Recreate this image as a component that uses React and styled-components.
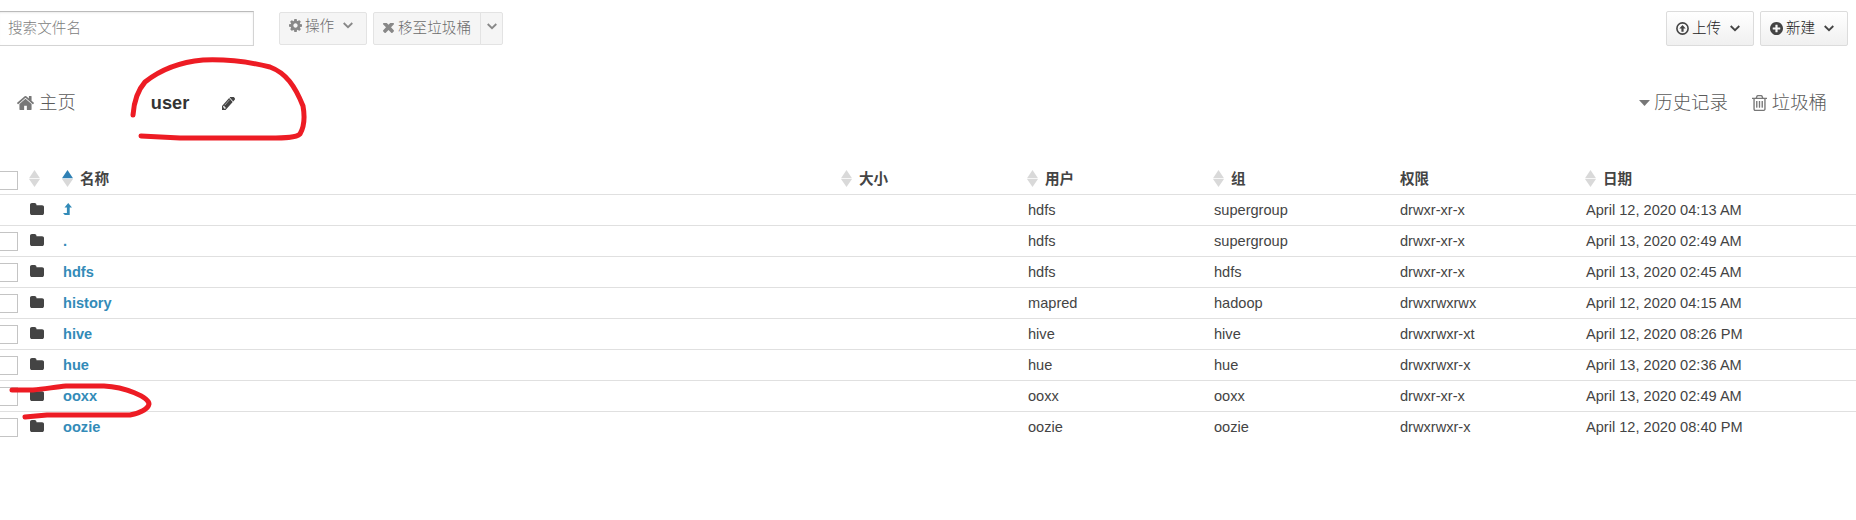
import React from "react";
import styled, { createGlobalStyle } from "styled-components";

const GlobalStyle = createGlobalStyle`
  * { box-sizing: border-box; }
  body {
    margin: 0;
    background: #fff;
    overflow: hidden;
    color: #444;
    font-family: "Liberation Sans", "Noto Sans CJK SC", sans-serif;
    font-size: 14.6px;
    line-height: 22px;
  }
`;

const Page = styled.div`
  position: relative;
  width: 1856px;
  height: 520px;
  overflow: hidden;
`;

const Toolbar = styled.header`
  display: flex;
  align-items: center;
  height: 46px;
  padding: 11px 8px 0 0;
  font-weight: 300;
`;

const SearchInput = styled.input`
  width: 256px;
  height: 35px;
  margin: 0 23px 0 -2px;
  padding: 0 9px 2px;
  border: 1px solid #d4d4d4;
  border-top-color: #bbb;
  box-shadow: inset 0 1px 2px rgba(0, 0, 0, 0.08);
  color: #555;
  font: inherit;
  outline: none;
  &::placeholder { color: #7c7c7c; opacity: 1; }
`;

const Button = styled.button`
  display: flex;
  align-items: center;
  width: ${(p) => p.$width}px;
  height: ${(p) => (p.$muted ? 33 : 35)}px;
  padding: 0 0 ${(p) => p.$lift || 1}px ${(p) => p.$pad ?? 9}px;
  margin: 0 0 0 ${(p) => p.$gap || 0}px;
  border: 1px solid ${(p) => (p.$muted ? "#e3e3e3" : "#dcdcdc")};
  border-radius: ${(p) => p.$radius || "2px"};
  background: ${(p) => (p.$muted ? "#f5f5f5" : "linear-gradient(#fff, #f0f0f0)")};
  color: ${(p) => (p.$muted ? "#888" : "#444")};
  font: inherit;
  white-space: nowrap;
`;

const Label = styled.span`
  margin: 0 ${(p) => p.$after || 0}px 0 ${(p) => p.$before ?? 3}px;
  color: ${(p) => (p.$muted ? "#6c6c6c" : "#222")};
`;

const Spacer = styled.div`
  flex: 1;
`;

const Breadcrumbs = styled.nav`
  display: flex;
  align-items: center;
  height: 116px;
  padding: 0 29px 2px 17px;
  color: #777;
  font-size: 18.4px;
  font-weight: 300;
`;

const Crumb = styled.div`
  display: flex;
  align-items: center;
  gap: ${(p) => p.$gap || 4}px;
  margin-left: ${(p) => p.$left || 0}px;
`;

const CrumbText = styled.span`
  color: #5a5a5a;
`;

const CurrentFolder = styled.strong`
  margin: 0 33px 0 75px;
  color: #333;
  font-size: 18.2px;
  font-weight: 700;
  line-height: 24px;
`;

const EditIcon = styled.span`
  display: flex;
  color: #444;
`;

const Row = styled.div`
  display: grid;
  grid-template-columns: 30px 33px 779px repeat(4, 186px) 1fr;
  align-items: center;
  height: ${(p) => (p.$head ? 33 : 31)}px;
  border-bottom: 1px solid #e0e0e0;
  font-weight: ${(p) => (p.$head ? 700 : 400)};
  &:last-child { border-bottom-color: transparent; }
`;

const Checkbox = styled.span`
  width: 19px;
  height: 19px;
  margin: ${(p) => (p.$head ? "4px" : "1px")} 0 0 -1px;
  border: 1px solid #c4c4c4;
  background: #fff;
`;

const Cell = styled.div`
  display: flex;
  align-items: center;
  gap: 7px;
  padding-top: 1px;
  white-space: nowrap;
`;

const FileLink = styled.a`
  display: flex;
  color: #338bb8;
  font-weight: 700;
`;

const FolderIcon = styled.span`
  display: flex;
  padding-bottom: 2px;
`;

const Svg = styled.svg`
  display: block;
  flex: none;
`;

const SortIcon = styled(Svg)`
  margin-left: -1px;
`;

const Annotation = styled.svg`
  position: absolute;
  inset: 0;
  pointer-events: none;
`;

const glyphs = {
  folder: "M1728 608v704q0 92-66 158t-158 66h-1216q-92 0-158-66t-66-158v-960q0-92 66-158t158-66h320q92 0 158 66t66 158v32h672q92 0 158 66t66 158z",
  home: "M1472 992v480q0 26-19 45t-45 19h-384v-384h-256v384h-384q-26 0-45-19t-19-45v-480q0-1 .5-3t.5-3l575-474 575 474q1 2 1 6zm223-69l-62 74q-8 9-21 11h-3q-13 0-21-7l-692-577-692 577q-12 8-24 7-13-2-21-11l-62-74q-8-10-7-23.5t11-21.5l719-599q32-26 76-26t76 26l244 204v-195q0-14 9-23t23-9h192q14 0 23 9t9 23v408l219 182q10 8 11 21.5t-7 23.5z",
  pencil: "M491 1536l91-91-235-235-91 91v107h128v128h107zm523-928q0-22-22-22-10 0-17 7l-542 542q-7 7-7 17 0 22 22 22 10 0 17-7l542-542q7-7 7-17zm-54-192l416 416-832 832h-416v-416zm683 96q0 53-37 90l-166 166-416-416 166-165q36-38 90-38 53 0 91 38l235 234q37 39 37 91z",
  times: "M1490 1322q0 40-28 68l-136 136q-28 28-68 28t-68-28l-294-294-294 294q-28 28-68 28t-68-28l-136-136q-28-28-28-68t28-68l294-294-294-294q-28-28-28-68t28-68l136-136q28-28 68-28t68 28l294 294 294-294q28-28 68-28t68 28l136 136q28 28 28 68t-28 68l-294 294 294 294q28 28 28 68z",
  cog: "M1152 896q0-106-75-181t-181-75-181 75-75 181 75 181 181 75 181-75 75-181zm512-109v222q0 12-8 23t-20 13l-185 28q-19 54-39 91 35 50 107 138 10 12 10 25t-9 23q-27 37-99 108t-94 71q-12 0-26-9l-138-108q-44 23-91 38-16 136-29 186-7 28-36 28h-222q-14 0-24.5-8.5t-11.5-21.5l-28-184q-49-16-90-37l-141 107q-10 9-25 9-14 0-25-11-126-114-165-168-7-10-7-23 0-12 8-23 15-21 51-66.5t54-70.5q-27-50-41-99l-183-27q-13-2-21-12.5t-8-23.5v-222q0-12 8-23t19-13l186-28q14-46 39-92-40-57-107-138-10-12-10-24 0-10 9-23 26-36 98.5-107.5t94.5-71.5q13 0 26 10l138 107q44-23 91-38 16-136 29-186 7-28 36-28h222q14 0 24.5 8.5t11.5 21.5l28 184q49 16 90 37l142-107q9-9 24-9 13 0 25 10 129 119 165 170 7 8 7 22 0 12-8 23-15 21-51 66.5t-54 70.5q26 50 41 98l183 28q13 2 21 12.5t8 23.5z",
  plus: "M1344 960v-128q0-26-19-45t-45-19h-256v-256q0-26-19-45t-45-19h-128q-26 0-45 19t-19 45v256h-256q-26 0-45 19t-19 45v128q0 26 19 45t45 19h256v256q0 26 19 45t45 19h128q26 0 45-19t19-45v-256h256q26 0 45-19t19-45zm320-64q0 209-103 385.5t-279.5 279.5-385.5 103-385.5-103-279.5-279.5-103-385.5 103-385.5 279.5-279.5 385.5-103 385.5 103 279.5 279.5 103 385.5z",
  trash: "M704 736v576q0 14-9 23t-23 9h-64q-14 0-23-9t-9-23v-576q0-14 9-23t23-9h64q14 0 23 9t9 23zm256 0v576q0 14-9 23t-23 9h-64q-14 0-23-9t-9-23v-576q0-14 9-23t23-9h64q14 0 23 9t9 23zm256 0v576q0 14-9 23t-23 9h-64q-14 0-23-9t-9-23v-576q0-14 9-23t23-9h64q14 0 23 9t9 23zm128 724v-948h-896v948q0 22 7 40.5t14.5 27 10.5 8.5h832q3 0 10.5-8.5t14.5-27 7-40.5zm-672-1076h448l-48-117q-7-9-17-11h-317q-10 2-17 11zm928 32v64q0 14-9 23t-23 9h-96v948q0 83-47 143.5t-113 60.5h-832q-66 0-113-58.5t-47-141.5v-952h-96q-14 0-23-9t-9-23v-64q0-14 9-23t23-9h309l70-167q15-37 54-63t79-26h320q40 0 79 26t54 63l70 167h309q14 0 23 9t9 23z",
};

// Each glyph is cropped to its own ink box so that sizes are exact.
const boxes = {
  folder: "64 128 1664 1408",
  home: "89 253 1614 1283",
  pencil: "128 309 1515 1355",
  times: "302 502 1188 1052",
  cog: "128 128 1536 1536",
  plus: "128 128 1536 1536",
  trash: "192 128 1408 1536",
};

const Glyph = ({ name, w, h = w }) => (
  <Svg width={w} height={h} viewBox={boxes[name]} preserveAspectRatio="none" fill="currentColor">
    <path d={glyphs[name]} />
  </Svg>
);

const Chevron = () => (
  <Svg width="10" height="7" viewBox="0 0 10 7" fill="none" stroke="currentColor" strokeWidth="1.8">
    <path d="M.7 1 5 5.2 9.3 1" />
  </Svg>
);

const UploadIcon = () => (
  <Svg width="13" height="13" viewBox="0 0 13 13" fill="none" stroke="currentColor">
    <circle cx="6.5" cy="6.5" r="5.6" strokeWidth="1.6" />
    <path d="M6.5 2.9 9.7 6.4H7.6V9.7H5.4V6.4H3.3Z" fill="currentColor" stroke="none" />
  </Svg>
);

const LevelUp = () => (
  <Svg width="9" height="14" viewBox="0 0 9 14" fill="currentColor">
    <path d="M5.2 0 9 4.4H6.7V12H1.8L0 9.9H3.9V4.4H1.5Z" />
  </Svg>
);

const Sorter = ({ active }) => (
  <SortIcon width="11" height="17" viewBox="0 0 11 17" fill="#d9d9d9">
    <path d="M5.5 0 11 8.2H0Z" fill={active ? "#2f80b4" : "#d9d9d9"} />
    <path d="M0 9H11L5.5 17Z" />
  </SortIcon>
);

const CaretDown = () => (
  <Svg width="11" height="6" viewBox="0 0 11 6" fill="currentColor">
    <path d="M0 0H11L5.5 6Z" />
  </Svg>
);

const columns = [
  ["名称", true, true],
  ["大小", true],
  ["用户", true],
  ["组", true],
  ["权限", false],
  ["日期", true],
];

const files = [
  ["up", "hdfs", "supergroup", "drwxr-xr-x", "April 12, 2020 04:13 AM"],
  [".", "hdfs", "supergroup", "drwxr-xr-x", "April 13, 2020 02:49 AM"],
  ["hdfs", "hdfs", "hdfs", "drwxr-xr-x", "April 13, 2020 02:45 AM"],
  ["history", "mapred", "hadoop", "drwxrwxrwx", "April 12, 2020 04:15 AM"],
  ["hive", "hive", "hive", "drwxrwxr-xt", "April 12, 2020 08:26 PM"],
  ["hue", "hue", "hue", "drwxrwxr-x", "April 13, 2020 02:36 AM"],
  ["ooxx", "ooxx", "ooxx", "drwxr-xr-x", "April 13, 2020 02:49 AM"],
  ["oozie", "oozie", "oozie", "drwxrwxr-x", "April 12, 2020 08:40 PM"],
];

export default function App() {
  return (
    <Page>
      <GlobalStyle />
      <Toolbar>
        <SearchInput placeholder="搜索文件名" />
        <Button $muted $width={88} $gap={2} $lift={6}>
          <Glyph name="cog" w={13} />
          <Label $muted $after={9}>操作</Label>
          <Chevron />
        </Button>
        <Button $muted $width={108} $gap={6} $lift={2} $radius="2px 0 0 2px">
          <Glyph name="times" w={11} h={10} />
          <Label $muted $before={4}>移至垃圾桶</Label>
        </Button>
        <Button $muted $width={23} $gap={-1} $pad={6} $lift={4} $radius="0 2px 2px 0">
          <Chevron />
        </Button>
        <Spacer />
        <Button $width={88}>
          <UploadIcon />
          <Label $after={9}>上传</Label>
          <Chevron />
        </Button>
        <Button $width={88} $gap={6}>
          <Glyph name="plus" w={13} />
          <Label $after={9}>新建</Label>
          <Chevron />
        </Button>
      </Toolbar>

      <Breadcrumbs>
        <Crumb $gap={5}>
          <Glyph name="home" w={17} h={14} />
          <CrumbText>主页</CrumbText>
        </Crumb>
        <CurrentFolder>user</CurrentFolder>
        <EditIcon>
          <Glyph name="pencil" w={13} h={13} />
        </EditIcon>
        <Spacer />
        <Crumb>
          <CaretDown />
          <CrumbText>历史记录</CrumbText>
        </Crumb>
        <Crumb $left={24} $gap={5}>
          <Glyph name="trash" w={15} h={16} />
          <CrumbText>垃圾桶</CrumbText>
        </Crumb>
      </Breadcrumbs>

      <div>
        <Row $head>
          <Checkbox $head />
          <Cell>
            <Sorter />
          </Cell>
          {columns.map(([title, sortable, active]) => (
            <Cell key={title}>
              {sortable && <Sorter active={active} />}
              {title}
            </Cell>
          ))}
        </Row>
        {files.map(([name, user, group, mode, date]) => (
          <Row key={name}>
            {name === "up" ? <span /> : <Checkbox />}
            <FolderIcon>
              <Glyph name="folder" w={14} h={12} />
            </FolderIcon>
            <FileLink>{name === "up" ? <LevelUp /> : name}</FileLink>
            <span />
            <span>{user}</span>
            <span>{group}</span>
            <span>{mode}</span>
            <span>{date}</span>
          </Row>
        ))}
      </div>

      <Annotation width="1856" height="520" fill="none" stroke="#ed1c24" strokeWidth="5" strokeLinecap="round" strokeLinejoin="round">
        <path d="M133 115C134 101 138 90 145 82C160 70 181 62 203 60C227 59 250 62 270 67C286 73 295 86 303 106C305 117 304 127 300 134C296 138 284 138 270 138H180L141 136" />
        <path d="M12 390H33C45 389 55 387 66 386H104C125 387 149 397 149 404C148 409 140 413 130 415H47L25 417" />
      </Annotation>
    </Page>
  );
}
